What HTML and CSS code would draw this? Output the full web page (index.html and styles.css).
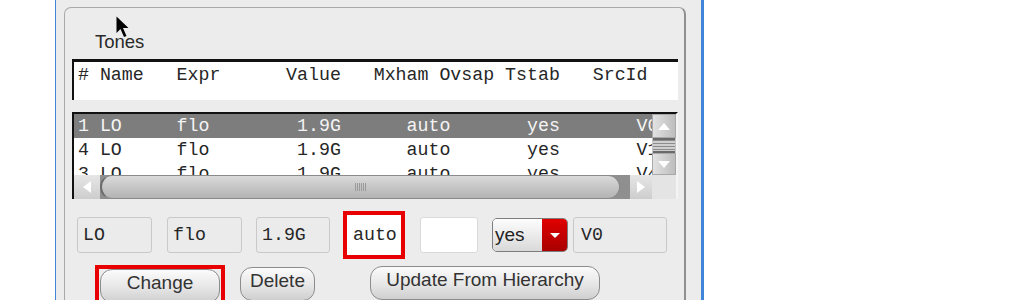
FILE: index.html
```html
<!DOCTYPE html>
<html lang="en">
<head>
    <meta charset="UTF-8">
    <title>Tones</title>
    <link rel="stylesheet" href="styles.css">
</head>
<body>
   <div class="frame">
    <div class="group">
        <div class="title">Tones</div>
        <div class="head">
            <div class="line"># Name   Expr      Value   Mxham Ovsap Tstab   SrcId</div>
        </div>
        <div class="list">
            <div class="view">
                <div class="rows">
                    <div class="row sel">1 LO     flo        1.9G      auto       yes       V0</div>
                    <div class="row">4 LO     flo        1.9G      auto       yes       V1</div>
                    <div class="row">3 LO     flo        1.9G      auto       yes       V4</div>
                </div>
                <div class="vscroll">
                    <span class="vbtn up"></span>
                    <span class="vthumb"></span>
                    <span class="vbtn down"></span>
                </div>
            </div>
            <div class="hbar">
                <span class="hbtn left"></span>
                <div class="htrack"><div class="hthumb"><span class="grip"></span></div></div>
                <span class="hbtn right"></span>
                <span class="corner"></span>
            </div>
        </div>
        <div class="fields">
            <span class="fld f1">LO</span>
            <span class="fld f2">flo</span>
            <span class="fld f3">1.9G</span>
            <span class="mark fmark"><span class="fld white">auto</span></span>
            <span class="fld white f5"></span>
            <span class="combo"><span class="combo-text">yes</span><span class="combo-arrow"></span></span>
            <span class="fld f7">V0</span>
        </div>
        <div class="buttons">
            <span class="mark bmark"><button class="btn change">Change</button></span>
            <button class="btn delete">Delete</button>
            <button class="btn update">Update From Hierarchy</button>
        </div>
    </div>
   </div>

   <svg class="cursor" width="14" height="23" viewBox="0 0 14 23">
       <polygon points="0.5,0.5 0.5,17 4.5,13 8,21 10.5,20 7,12 12.5,12" fill="#000"/>
   </svg>
</body>
</html>
```

FILE: styles.css
```css
*{
    margin:0;
    padding:0;
    box-sizing:border-box;
}
body{
    width:1013px;
    height:300px;
    overflow:hidden;
    background:#fff;
    font-family:"Liberation Sans",Arial,sans-serif;
    position:relative;
}
.frame{
    margin-left:55px;
    width:649px;
    height:300px;
    background:#ececec;
    border-left:1px solid #3f86d8;
    border-right:3px solid #3f86d8;
    padding-top:7px;
    overflow:hidden;
}
.group{
    margin-left:8px;
    width:622px;
    height:320px;
    border:1px solid #a9a9a9;
    border-right:2px solid #8f8f8f;
    border-radius:7px 7px 0 0;
    padding:0 6px 0 7px;
}
.title{
    margin-top:24px;
    margin-left:23px;
    font-size:18.5px;
    line-height:20px;
    color:#2a2a2a;
}
.head{
    margin-top:7px;
    height:41px;
    background:#fff;
    border-top:3px solid #111;
    border-left:2px solid #111;
    padding:2px 0 0 4px;
}
.line,.row,.fld{
    font-family:"Liberation Mono","Courier New",monospace;
    font-size:18.25px;
    white-space:pre;
    color:#262626;
}
.line{
    line-height:22px;
}

/* list with scrollbars */
.list{
    margin-top:12px;
    width:606px;
    border-top:2px solid #111;
    border-left:2px solid #111;
    border-right:2px solid #f4f4f4;
    background:#fff;
}
.view{
    display:flex;
    height:61px;
}
.rows{
    width:578px;
    overflow:hidden;
}
.row{
    height:24px;
    line-height:24px;
    padding-left:4px;
}
.row.sel{
    background:#7d7d7d;
    color:#f4f4f4;
}
.vscroll{
    width:24px;
    display:flex;
    flex-direction:column;
    background:#c4c4c4;
}
.vbtn{
    display:flex;
    justify-content:center;
    align-items:center;
    background:linear-gradient(to right,#e2e2e2,#bdbdbd);
    border:1px solid #a8a8a8;
}
.vbtn.up{
    height:24px;
}
.vbtn.down{
    height:22px;
}
.vbtn.up::after{
    content:"";
    border-left:6px solid transparent;
    border-right:6px solid transparent;
    border-bottom:7px solid #fff;
}
.vbtn.down::after{
    content:"";
    border-left:6px solid transparent;
    border-right:6px solid transparent;
    border-top:7px solid #fff;
}
.vthumb{
    height:15px;
    background:repeating-linear-gradient(to bottom,#8c8c8c 0 1px,#cfcfcf 1px 3px);
    border-top:2px solid #6a6a6a;
    border-bottom:2px solid #6a6a6a;
    margin:0 1px;
}
.hbar{
    display:flex;
    height:24px;
    background:#c9c9c9;
}
.hbtn{
    width:26px;
    display:flex;
    justify-content:center;
    align-items:center;
    background:linear-gradient(to bottom,#e6e6e6,#cdcdcd);
}
.hbtn.left::after{
    content:"";
    border-top:6px solid transparent;
    border-bottom:6px solid transparent;
    border-right:8px solid #fff;
}
.hbtn.right{
    width:22px;
}
.hbtn.right::after{
    content:"";
    border-top:6px solid transparent;
    border-bottom:6px solid transparent;
    border-left:8px solid #fff;
}
.htrack{
    width:530px;
    background:#8f8f8f;
    padding-right:10px;
}
.hthumb{
    height:24px;
    border-radius:12px;
    border:1px solid #8a8a8a;
    border-left:2px solid #6c6c6c;
    background:linear-gradient(to bottom,#dadada,#c2c2c2 60%,#b3b3b3);
    display:flex;
    justify-content:center;
    align-items:center;
}
.grip{
    width:11px;
    height:8px;
    background:repeating-linear-gradient(to right,#9a9a9a 0 1px,transparent 1px 2px);
}
.corner{
    width:24px;
    background:#e4e4e4;
}

/* edit row */
.fields{
    display:flex;
    align-items:center;
    height:48px;
    margin-top:12px;
    margin-left:5px;
}
.fld{
    height:36px;
    display:flex;
    align-items:center;
    padding-left:5px;
    background:#ebebeb;
    border:1px solid #c9c9c9;
    border-radius:3px;
}
.f1{ width:75px; }
.f2{ width:75px; margin-left:15px; }
.f3{ width:74px; margin-left:14px; }
.f5{ width:58px; margin-left:15px; }
.f7{ width:94px; margin-left:5px; padding-left:7px; }
.white{
    background:#fff;
    border-color:#dadada;
}
.mark{
    border:4px solid #e80000;
}
.fmark{
    margin-left:13px;
    width:62px;
    height:48px;
    background:#fff;
}
.fmark .fld{
    width:100%;
    height:100%;
    border:none;
    padding-left:6px;
}
.combo{
    margin-left:14px;
    width:76px;
    height:34px;
    display:flex;
    border:1px solid #7d7d7d;
    border-radius:5px;
    overflow:hidden;
}
.combo-text{
    flex:1;
    font-size:19px;
    line-height:32px;
    padding-left:2px;
    color:#222;
    background:linear-gradient(to bottom,#fdfdfd,#d9d9d9);
}
.combo-arrow{
    width:25px;
    display:flex;
    justify-content:center;
    align-items:center;
    background:linear-gradient(to bottom,#e00000,#a80000);
}
.combo-arrow::after{
    content:"";
    border-left:5px solid transparent;
    border-right:5px solid transparent;
    border-top:5px solid #fff;
}

/* buttons */
.buttons{
    display:flex;
    align-items:flex-start;
    margin-top:6px;
    margin-left:23px;
}
.bmark{
    width:130px;
    height:40px;
    padding:0 1px;
}
.btn{
    all:unset;
    box-sizing:border-box;
    height:34px;
    padding-bottom:6px;
    line-height:22px;
    text-align:center;
    font-family:"Liberation Sans",Arial,sans-serif;
    font-size:19px;
    color:#333;
    border:1px solid #8c8c8c;
    border-radius:12px;
    background:linear-gradient(to bottom,#fbfbfb,#e6e6e6 55%,#cfcfcf);
}
.change{
    width:120px;
}
.delete{
    width:75px;
    margin-left:15px;
    margin-top:2px;
}
.update{
    width:230px;
    margin-left:55px;
    margin-top:1px;
}
.cursor{
    position:absolute;
    left:116px;
    top:16px;
}
```
